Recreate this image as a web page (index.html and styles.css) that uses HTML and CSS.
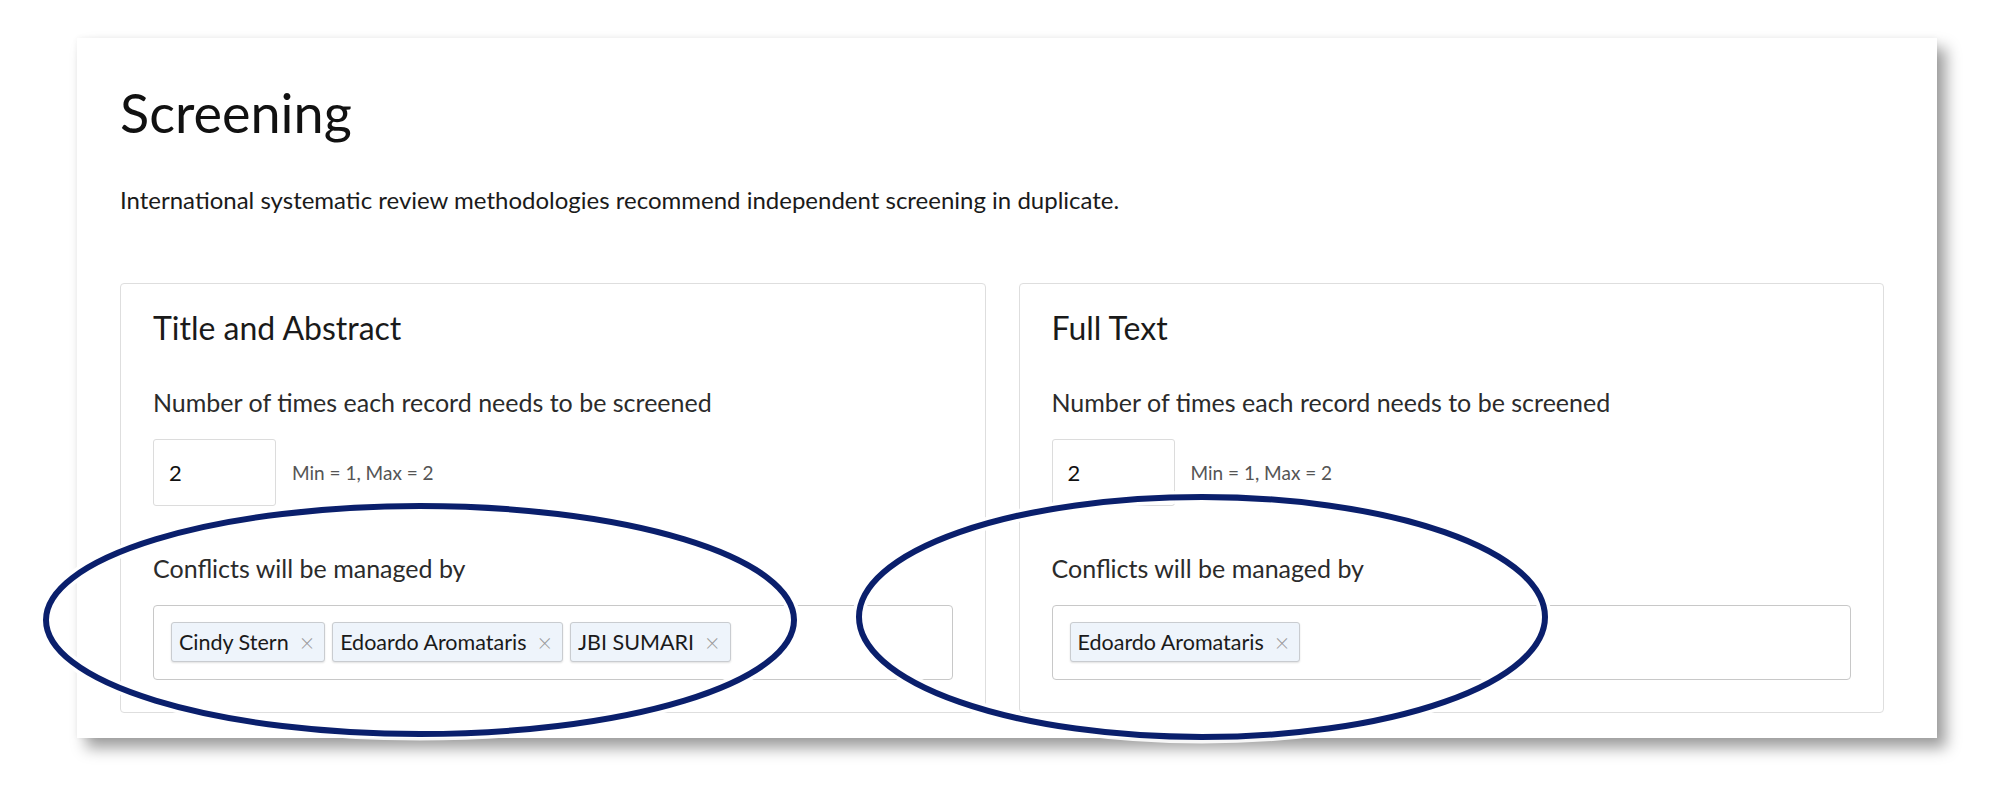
FILE: index.html
```html
<!DOCTYPE html>
<html lang="en">
<head>
<meta charset="utf-8">
<title>Screening</title>
<link rel="stylesheet" href="styles.css">
</head>
<body>
<div class="page">
  <section class="panel">
    <h1 class="panel-title">Screening</h1>
    <p class="panel-desc">International systematic review methodologies recommend independent screening in duplicate.</p>
    <div class="cards">
      <div class="card">
        <h2 class="card-title">Title and Abstract</h2>
        <div class="field-label">Number of times each record needs to be screened</div>
        <div class="count-row">
          <div class="count-input">2</div>
          <span class="count-hint">Min = 1, Max = 2</span>
        </div>
        <div class="field-label conflicts">Conflicts will be managed by</div>
        <div class="tag-box">
          <span class="tag">Cindy Stern<span class="tag-x">×</span></span>
          <span class="tag">Edoardo Aromataris<span class="tag-x">×</span></span>
          <span class="tag">JBI SUMARI<span class="tag-x">×</span></span>
        </div>
      </div>
      <div class="card">
        <h2 class="card-title">Full Text</h2>
        <div class="field-label">Number of times each record needs to be screened</div>
        <div class="count-row">
          <div class="count-input">2</div>
          <span class="count-hint">Min = 1, Max = 2</span>
        </div>
        <div class="field-label conflicts">Conflicts will be managed by</div>
        <div class="tag-box">
          <span class="tag">Edoardo Aromataris<span class="tag-x">×</span></span>
        </div>
      </div>
    </div>
  </section>
  <svg class="annotations" width="2000" height="810" viewBox="0 0 2000 810" aria-hidden="true">
    <ellipse class="halo" cx="420" cy="620" rx="374" ry="114"/>
    <ellipse class="ring" cx="420" cy="620" rx="374" ry="114"/>
    <ellipse class="halo" cx="1202" cy="617" rx="343" ry="120"/>
    <ellipse class="ring" cx="1202" cy="617" rx="343" ry="120"/>
  </svg>
</div>
</body>
</html>
```

FILE: styles.css
```css
* { box-sizing: border-box; }
html, body { margin: 0; padding: 0; background: #ffffff; }
body {
  font-family: Lato, "Noto Sans", "Liberation Sans", sans-serif;
  color: #1a1a1a;
  width: 2000px;
  height: 810px;
  overflow: hidden;
}
.page {
  position: relative;
  width: 2000px;
  height: 810px;
  padding: 38px 0 0 77px;
}
.panel {
  width: 1860px;
  height: 700px;
  background: #fff;
  padding: 0 53px 0 43px;
  box-shadow: 9px 10px 14px rgba(0, 0, 0, 0.38), 0 0 6px rgba(0, 0, 0, 0.05);
}
.panel-title {
  margin: 0;
  padding-top: 44px;
  font-size: 54px;
  font-weight: 400;
  line-height: 62px;
  color: #111;
}
.panel-desc {
  margin: 0;
  padding-top: 42px;
  font-size: 24px;
  line-height: 28px;
  color: #1a1a1a;
}
.cards {
  display: flex;
  gap: 33px;
  margin-top: 69px;
}
.card {
  flex: 1;
  height: 430px;
  border: 1px solid #dedede;
  border-radius: 4px;
  padding: 0 32px;
}
.card-title {
  margin: 0;
  padding-top: 24px;
  font-size: 32px;
  font-weight: 400;
  line-height: 40px;
  color: #1a1a1a;
}
.field-label {
  font-size: 25px;
  line-height: 30px;
  color: #2b2b2b;
  margin-top: 39px;
}
.field-label.conflicts { margin-top: 47px; }
.count-row {
  display: flex;
  align-items: center;
  gap: 16px;
  margin-top: 22px;
}
.count-input {
  width: 123px;
  height: 67px;
  border: 1px solid #dcdcdc;
  border-radius: 3px;
  padding-left: 15px;
  font-size: 22px;
  line-height: 65px;
  color: #111;
}
.count-hint {
  font-size: 19px;
  color: #555;
}
.tag-box {
  display: flex;
  gap: 7px;
  margin-top: 22px;
  height: 75px;
  border: 1px solid #c8c8c8;
  border-radius: 4px;
  padding: 16px 17px;
}
.tag {
  display: inline-flex;
  align-items: center;
  height: 40px;
  padding: 0 10px 0 7px;
  background: #eef4fb;
  border: 1px solid #c9ccd0;
  border-radius: 3px;
  box-shadow: 0 1px 2px rgba(0, 0, 0, 0.12);
  font-size: 21.5px;
  color: #1a1a1a;
}
.tag-x {
  margin-left: 11px;
  font-size: 25px;
  font-weight: 300;
  color: #9a9a9a;
}
.annotations {
  position: absolute;
  left: 0;
  top: 0;
  pointer-events: none;
}
.annotations ellipse { fill: none; }
.annotations .halo { stroke: rgba(255, 255, 255, 0.9); stroke-width: 13; }
.annotations .ring { stroke: #0a1f6c; stroke-width: 6; }
```
